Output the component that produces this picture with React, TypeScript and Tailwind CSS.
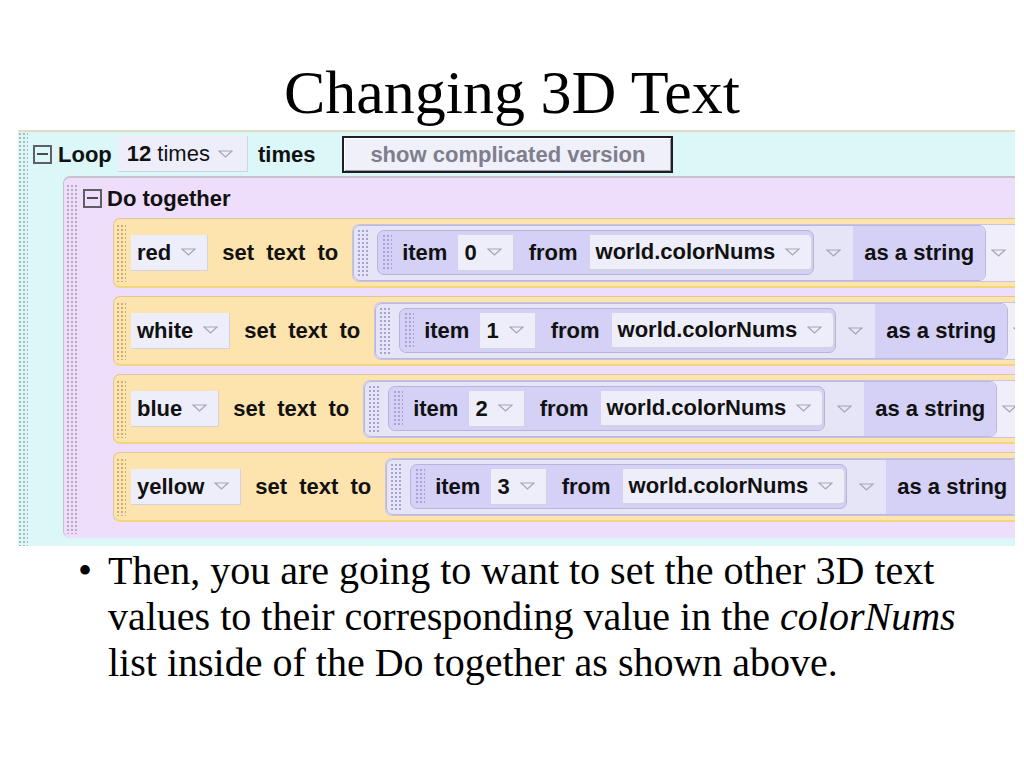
import type { ReactNode } from 'react';

const SANS = "font-['Liberation_Sans',Arial,sans-serif]";
const SERIF = "font-['Liberation_Serif','Times_New_Roman',serif]";

function Tri() {
    return (
        <svg width="15" height="8" viewBox="0 0 15 8" className="shrink-0">
            <polygon points="1,1 14,1 7.5,7" fill="none" stroke="#a6a6b8" strokeWidth="1.2" />
        </svg>
    );
}

function Grip({ dot, className = '' }: { dot: string; className?: string }) {
    return (
        <div
            className={`shrink-0 bg-[length:4px_4px] ${className}`}
            style={{ backgroundImage: `radial-gradient(circle, ${dot} 0.9px, transparent 1.2px)` }}
        />
    );
}

function MinusBox() {
    return (
        <span className="flex h-[19px] w-[19px] shrink-0 items-center justify-center border-2 border-[#5e5e66]">
            <span className="h-[2px] w-[11px] bg-[#4a4a52]" />
        </span>
    );
}

function Field({ children, className = '' }: { children: ReactNode; className?: string }) {
    return (
        <span
            className={`flex h-[36px] shrink-0 items-center gap-[10px] border-b border-r border-[#d2d2e2] bg-[#eeeefb] pl-[6px] pr-[11px] ${className}`}
        >
            {children}
            <Tri />
        </span>
    );
}

function SetRow({ name, idx }: { name: string; idx: number }) {
    return (
        <div className="flex h-[70px] items-center rounded-l-[7px] border border-r-0 border-b-2 border-[#d8c89e] border-b-[#f3d67a] bg-[#fde3ad]">
            <Grip dot="#c9ae78" className="ml-[2px] h-[58px] w-[10px]" />
            <Field className="ml-[5px] font-bold">{name}</Field>
            <span className="ml-[14px] shrink-0 font-bold [word-spacing:6px]">set text to</span>
            <div className="ml-[14px] flex h-[58px] shrink-0 grow items-center rounded-l-[7px] border border-r-0 border-[#c8c4de] bg-[#efeefa]">
                <div className="flex h-full items-stretch rounded-[7px] border border-[#bcb7dc] bg-[#e6e4f7]">
                    <Grip dot="#a9a2d4" className="ml-[3px] my-[3px] w-[11px]" />
                    <div className="flex items-center pl-[9px]">
                        <div className="flex h-[45px] items-center rounded-[7px] border border-[#b9b3dc] bg-[#d4d0f6]">
                            <Grip dot="#a9a2d4" className="ml-[4px] h-[37px] w-[10px]" />
                            <span className="ml-[10px] font-bold">item</span>
                            <Field className="ml-[11px] font-bold">{idx}</Field>
                            <span className="ml-[15px] font-bold">from</span>
                            <Field className="ml-[12px] rounded-r-[5px] border-b-2 border-r-2 border-[#b4b0c8] font-bold">
                                world.colorNums
                            </Field>
                        </div>
                    </div>
                    <div className="flex items-center px-[12px]">
                        <Tri />
                    </div>
                    <div className="flex items-center rounded-r-[7px] bg-[#d4d0f6] px-[11px] font-bold">
                        as a string
                    </div>
                </div>
                <div className="px-[5px]">
                    <Tri />
                </div>
            </div>
        </div>
    );
}

export default function App() {
    const rows = ['red', 'white', 'blue', 'yellow'];

    return (
        <div className="h-[768px] w-[1024px] overflow-hidden bg-white text-black">
            <div className={`h-[130px] pt-[61px] text-center text-[62px] leading-none ${SERIF}`}>
                Changing 3D Text
            </div>

            <div
                className={`ml-[18px] flex h-[416px] w-[997px] overflow-hidden border-t-2 border-[#e2dcc6] bg-[#dcf7f8] text-[22px] text-[#111] ${SANS}`}
            >
                <Grip dot="#a9b8b8" className="h-full w-[10px]" />
                <div className="flex min-w-0 flex-1 flex-col">
                    <div className="flex h-[44px] shrink-0 items-center">
                        <span className="ml-[5px]">
                            <MinusBox />
                        </span>
                        <span className="ml-[6px] font-bold">Loop</span>
                        <span className="ml-[6px] flex h-[36px] items-center gap-[8px] border-b border-r border-[#d2d2e2] bg-[#eeeefb] pl-[9px] pr-[14px]">
                            <span>
                                <span className="font-bold">12</span> times
                            </span>
                            <Tri />
                        </span>
                        <span className="ml-[10px] font-bold">times</span>
                        <span className="ml-[27px] flex h-[37px] w-[331px] shrink-0 items-center justify-center border-2 border-[#1e1e22] bg-[#f0f0fa] font-bold text-[#7e7e8c] shadow-[inset_1px_1px_0_#ffffff,inset_-1px_-1px_0_#9a9aa6]">
                            show complicated version
                        </span>
                    </div>

                    <div className="ml-[35px] flex h-[362px] rounded-l-[7px] border-l border-t-2 border-[#c6c2ce] bg-[#efdefb]">
                        <Grip dot="#b9a6cc" className="ml-[2px] mt-[6px] mb-[4px] w-[12px]" />
                        <div className="flex min-w-0 flex-1 flex-col">
                            <div className="flex h-[40px] shrink-0 items-center">
                                <span className="ml-[5px]">
                                    <MinusBox />
                                </span>
                                <span className="ml-[5px] font-bold">Do together</span>
                            </div>
                            <div className="ml-[35px] flex flex-col gap-[8px]">
                                {rows.map((r, i) => (
                                    <SetRow key={r} name={r} idx={i} />
                                ))}
                            </div>
                        </div>
                    </div>
                </div>
            </div>

            <div className={`mt-[2px] flex pl-[78px] text-[40px] leading-[46px] ${SERIF}`}>
                <span className="w-[30px] shrink-0">•</span>
                <p>
                    Then, you are going to want to set the other 3D text
                    <br />
                    values to their corresponding value in the <i>colorNums</i>
                    <br />
                    list inside of the Do together as shown above.
                </p>
            </div>
        </div>
    );
}
